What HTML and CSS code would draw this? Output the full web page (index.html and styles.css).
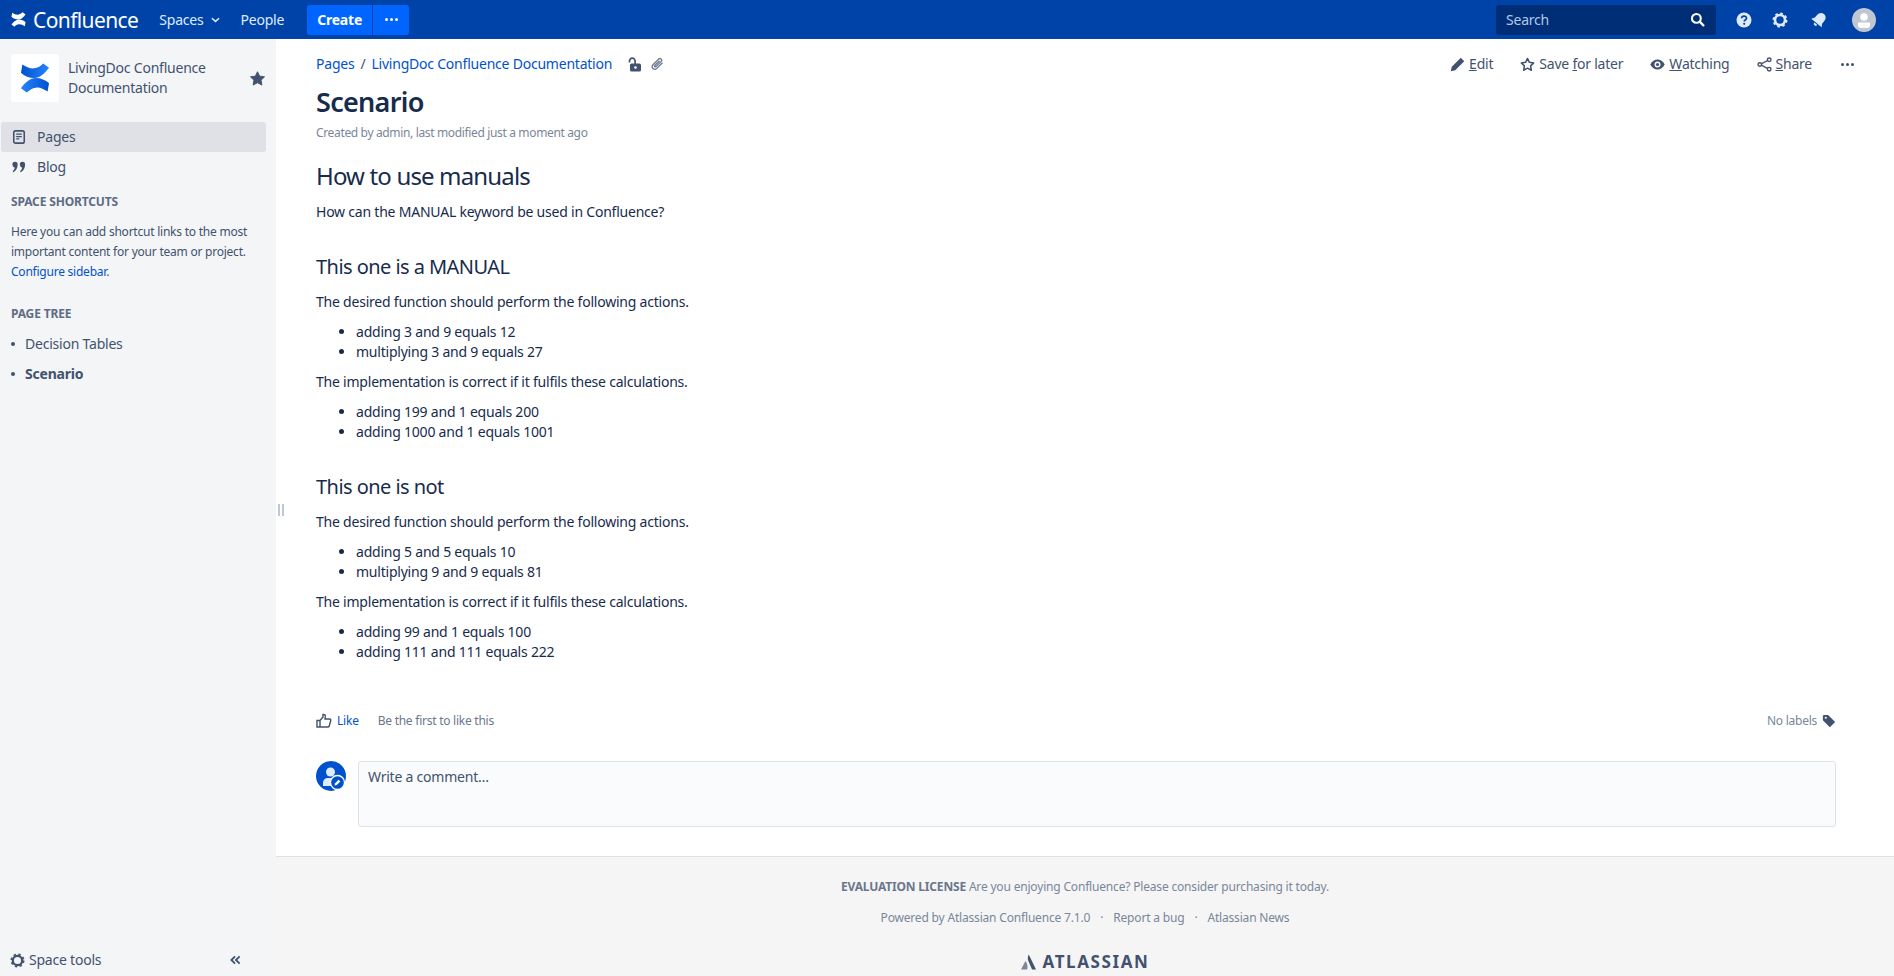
FILE: index.html
```html
<!DOCTYPE html>
<html>
	<head>
		<meta charset="utf-8">
		<title>Scenario</title>
		<link rel="stylesheet" href="styles.css">
	</head>
	<body>
		<header class="topbar">
			<a class="logo" href="#">
				<svg class="logo-mark" viewBox="0 0 30 31"><path d="M2 1.500C6 4 10 6 14 5.500 18 5 21 3 23.500.5L29.500 5C25 11 20 15.500 14.500 15.500 9 15.500 4 13.500.5 10z" fill="#fff"/><path d="M2 1.500C6 4 10 6 14 5.500 18 5 21 3 23.500.5L29.500 5C25 11 20 15.500 14.500 15.500 9 15.500 4 13.500.5 10z" fill="#fff" transform="rotate(180 15 15.500)"/></svg>
				<span class="logo-text">Confluence</span>
			</a>
			<nav class="topnav">
				<a href="#">Spaces <svg class="caret" viewBox="0 0 10 6"><path d="M1 1l4 3.600L9 1" fill="none" stroke="#deebff" stroke-width="1.700"/></svg></a>
				<a href="#">People</a>
			</nav>
			<div class="create-group">
				<a class="create" href="#">Create</a>
				<a class="create-more" href="#"><i></i><i></i><i></i></a>
			</div>
			<div class="topbar-right">
				<div class="search">
					<span>Search</span>
					<svg viewBox="0 0 16 16"><circle cx="6.800" cy="6.800" r="4.700" fill="none" stroke="#fff" stroke-width="2.200"/><path d="M10.300 10.300l4 4" stroke="#fff" stroke-width="2.400" stroke-linecap="round"/></svg>
				</div>
				<svg class="top-icon" viewBox="0 0 16 16"><circle cx="8" cy="8" r="7.500" fill="#deebff"/><path d="M5.700 6.300c0-3 4.800-3 4.800-.1 0 1.800-2.300 1.700-2.300 3.300" fill="none" stroke="#0043a8" stroke-width="1.700"/><circle cx="8.200" cy="11.800" r="1.100" fill="#0043a8"/></svg>
				<svg class="top-icon" viewBox="0 0 16 16"><circle cx="8" cy="8" r="5" fill="none" stroke="#deebff" stroke-width="2.600"/><circle cx="8" cy="8" r="6.600" fill="none" stroke="#deebff" stroke-width="1.800" stroke-dasharray="2.600 2.600"/></svg>
				<svg class="top-icon bell" viewBox="0 0 16 16"><g transform="rotate(40 8 8)"><path d="M8 .3C5 .3 3.300 2.500 3.300 5.400v3.400L1.300 12h13.400l-2-3.200V5.400C12.700 2.500 11 .3 8 .3z" fill="#deebff"/><path d="M6 13a2 2 0 0 0 4 0z" fill="#deebff"/></g></svg>
				<svg class="avatar" viewBox="0 0 24 24"><circle cx="12" cy="12" r="12" fill="#c1c7d0"/><circle cx="12" cy="9" r="3.800" fill="#fff"/><path d="M6 14.500h12v2.500a3 3 0 0 1-3 3H9a3 3 0 0 1-3-3z" fill="#fff"/></svg>
			</div>
		</header>

		<div class="layout">
			<aside class="sidebar">
				<div class="space-head">
					<div class="space-logo">
						<svg viewBox="0 0 30 31"><defs><linearGradient id="band" x1="0" y1="0" x2="1" y2="0"><stop offset="0" stop-color="#0052cc"/><stop offset="1" stop-color="#2684ff"/></linearGradient></defs><path d="M2 1.500C6 4 10 6 14 5.500 18 5 21 3 23.500.5L29.500 5C25 11 20 15.500 14.500 15.500 9 15.500 4 13.500.5 10z" fill="url(#band)"/><path d="M2 1.500C6 4 10 6 14 5.500 18 5 21 3 23.500.5L29.500 5C25 11 20 15.500 14.500 15.500 9 15.500 4 13.500.5 10z" fill="url(#band)" transform="rotate(180 15 15.500)"/></svg>
					</div>
					<div class="space-name">LivingDoc Confluence Documentation</div>
					<svg class="space-star" viewBox="0 0 16 16"><path d="M8 .8l2.300 4.700 5.200.7-3.700 3.600.9 5.200L8 12.500l-4.700 2.500.9-5.200L.5 6.200l5.200-.7z" fill="#42526e" stroke="#42526e" stroke-linejoin="round"/></svg>
				</div>
				<ul class="side-nav">
					<li class="active">
						<svg viewBox="0 0 14 16"><rect x="1" y="1" width="12" height="14" rx="2" fill="none" stroke="#42526e" stroke-width="1.800"/><path d="M3.800 4.800h6.400M3.800 7.500h6.400M3.800 10.200h3.500" stroke="#42526e" stroke-width="1.500"/></svg>
						Pages
					</li>
					<li>
						<svg viewBox="0 0 16 14"><path d="M3.500 1a3 3 0 0 1 3 3c0 4-2 7.500-5 9l-.8-1.200C2.400 10.500 3 9 3.100 7.600 1.500 7.500.5 6 .5 4.200A3 3 0 0 1 3.500 1zM12 1a3 3 0 0 1 3 3c0 4-2 7.500-5 9l-.8-1.200c1.700-1.300 2.300-2.800 2.400-4.200C10 7.500 9 6 9 4.200A3 3 0 0 1 12 1z" fill="#42526e"/></svg>
						Blog
					</li>
				</ul>
				<h5 class="side-title">SPACE SHORTCUTS</h5>
				<p class="side-text">Here you can add shortcut links to the most important content for your team or project. <a href="#">Configure sidebar</a>.</p>
				<h5 class="side-title tree-title">PAGE TREE</h5>
				<ul class="page-tree">
					<li>Decision Tables</li>
					<li class="current">Scenario</li>
				</ul>
				<div class="side-foot">
					<span class="space-tools">
						<svg viewBox="0 0 16 16"><circle cx="8" cy="8" r="5" fill="none" stroke="#42526e" stroke-width="2.400"/><circle cx="8" cy="8" r="6.600" fill="none" stroke="#42526e" stroke-width="1.800" stroke-dasharray="2.600 2.600"/></svg>
						Space tools
					</span>
					<svg class="collapse" viewBox="0 0 12 10"><path d="M5.500 1L1.500 5l4 4M10.500 1l-4 4 4 4" fill="none" stroke="#42526e" stroke-width="2"/></svg>
				</div>
			</aside>
			<span class="splitter"></span>

			<div class="main">
				<main class="content">
					<div class="page-top">
						<div class="crumbs">
							<a href="#">Pages</a><span class="sep">/</span><a href="#">LivingDoc Confluence Documentation</a>
							<svg class="crumb-lock" viewBox="0 0 14 15"><path d="M1.500 5.500V4a2.800 2.800 0 0 1 5.600 0v4" fill="none" stroke="#42526e" stroke-width="1.700"/><rect x="2" y="6.500" width="11" height="8" rx="1.500" fill="#42526e"/><circle cx="7.500" cy="10.500" r="1.300" fill="#fff"/></svg>
							<svg class="crumb-clip" viewBox="0 0 16 16"><path d="M14.300 6.500L7.800 13c-3 2.900-7.200-1.100-4.400-4.200l6.400-6.400c2-1.900 4.800.9 2.800 2.900L6.900 11c-1 .9-2.300-.3-1.400-1.300l5.400-5.400" fill="none" stroke="#6b778c" stroke-width="1.500"/></svg>
						</div>
						<div class="actions">
							<a href="#"><svg viewBox="0 0 16 16"><path d="M11.500.8l3.700 3.700-9.600 9.600-4.800 1.100 1.100-4.800z" fill="#42526e"/></svg><span><u>E</u>dit</span></a>
							<a href="#"><svg viewBox="0 0 16 16"><path d="M8 1.500l2 4.200 4.600.6-3.300 3.200.8 4.600L8 11.900l-4.100 2.200.8-4.600-3.300-3.200L6 5.700z" fill="none" stroke="#42526e" stroke-width="1.600" stroke-linejoin="round"/></svg><span>Save <u>f</u>or later</span></a>
							<a href="#"><svg viewBox="0 0 16 16"><path d="M.3 8C2.300 4.400 4.900 2.600 8 2.600s5.700 1.800 7.700 5.400c-2 3.600-4.600 5.400-7.700 5.400S2.300 11.600.3 8z" fill="#42526e"/><circle cx="8" cy="8" r="3.200" fill="#fff"/><circle cx="8" cy="8" r="1.700" fill="#42526e"/></svg><span><u>W</u>atching</span></a>
							<a href="#"><svg viewBox="0 0 16 16"><path d="M12.500 3L3.500 8l9 5" fill="none" stroke="#42526e" stroke-width="1.500"/><circle cx="13" cy="3" r="1.900" fill="#fff" stroke="#42526e" stroke-width="1.500"/><circle cx="3" cy="8" r="1.900" fill="#fff" stroke="#42526e" stroke-width="1.500"/><circle cx="13" cy="13" r="1.900" fill="#fff" stroke="#42526e" stroke-width="1.500"/></svg><span><u>S</u>hare</span></a>
							<a class="more" href="#"><i></i><i></i><i></i></a>
						</div>
					</div>

					<h1 class="page-title">Scenario</h1>
					<p class="page-meta">Created by admin, last modified just a moment ago</p>

					<div class="wiki">
						<h1>How to use manuals</h1>
						<p>How can the MANUAL keyword be used in Confluence?</p>
						<h2>This one is a MANUAL</h2>
						<p>The desired function should perform the following actions.</p>
						<ul>
							<li>adding 3 and 9 equals 12</li>
							<li>multiplying 3 and 9 equals 27</li>
						</ul>
						<p>The implementation is correct if it fulfils these calculations.</p>
						<ul>
							<li>adding 199 and 1 equals 200</li>
							<li>adding 1000 and 1 equals 1001</li>
						</ul>
						<h2>This one is not</h2>
						<p>The desired function should perform the following actions.</p>
						<ul>
							<li>adding 5 and 5 equals 10</li>
							<li>multiplying 9 and 9 equals 81</li>
						</ul>
						<p>The implementation is correct if it fulfils these calculations.</p>
						<ul>
							<li>adding 99 and 1 equals 100</li>
							<li>adding 111 and 111 equals 222</li>
						</ul>
					</div>

					<div class="like-row">
						<svg class="like-icon" viewBox="0 0 16 16"><path d="M1 7.500h3V14H1zM4 7.500L7 4V1.500c1.500-.5 2.500.8 2.300 2L9 6h4.500c1 0 1.500.8 1.200 1.700l-1.500 5.300c-.2.700-.7 1-1.300 1H4" fill="none" stroke="#42526e" stroke-width="1.400"/></svg>
						<a class="like" href="#">Like</a>
						<span class="like-note">Be the first to like this</span>
						<span class="labels">No labels
							<svg viewBox="0 0 16 16"><path d="M1 2.500A1.500 1.500 0 0 1 2.500 1H7l8 8-6 6-8-8z" fill="#42526e"/><circle cx="4.300" cy="4.300" r="1.200" fill="#fff"/></svg>
						</span>
					</div>

					<div class="comment">
						<svg class="comment-avatar" viewBox="0 0 30 30"><circle cx="15" cy="15" r="15" fill="#0052cc"/><circle cx="14.500" cy="11" r="4.500" fill="#deebff"/><path d="M7 25v-3c0-3 2-5 5-5h5c3 0 5 2 5 5v3z" fill="#deebff"/><circle cx="21.500" cy="21.500" r="7" fill="#0052cc" stroke="#fff" stroke-width="1.300"/><path d="M18.500 24.500l.6-2.300 3.500-3.500 1.700 1.700-3.500 3.500z" fill="#fff"/></svg>
						<div class="comment-box">Write a comment…</div>
					</div>
				</main>

				<footer class="footer">
					<p><b>EVALUATION LICENSE</b> Are you enjoying Confluence? Please consider purchasing it today.</p>
					<p class="foot-links"><span>Powered by Atlassian Confluence 7.1.0</span><span class="dot">·</span><span>Report a bug</span><span class="dot">·</span><span>Atlassian News</span></p>
					<div class="atlassian">
						<svg viewBox="0 0 16 16"><path d="M8.300 0c-1.300 2.400-1.400 5-.2 7.500l3.700 8.500h4.200z" fill="#42526e"/><path d="M5.200 7.500c-.2-.3-.5-.3-.7 0L0 16h6.500c.9-2.500.4-6-1.300-8.500z" fill="#7a869a"/></svg>
						<span>ATLASSIAN</span>
					</div>
				</footer>
			</div>
		</div>
	</body>
</html>
```

FILE: styles.css
```css
* {margin: 0; padding: 0; box-sizing: border-box;}
html, body {height: 100%; overflow: hidden;}
body {font-family: "Noto Sans", "Open Sans", sans-serif; font-size: 14px; line-height: 20px; letter-spacing: -.22px; color: #172b4d; background: #fff;}
a {color: inherit; text-decoration: none;}
ul {list-style: none;}
svg {display: block; flex: none;}

/* top bar */
.topbar {height: 39px; background: #0043a8; color: #deebff; display: flex; align-items: center; padding-left: 11px;}
.logo {display: flex; align-items: center; color: #fff;}
.logo-mark {width: 15px; height: 15px;}
.logo-text {font-size: 21px; margin-left: 7px; letter-spacing: -.6px;}
.topnav {display: flex; margin-left: 21px; gap: 20px;}
.topnav a {display: flex; align-items: center; gap: 8px;}
.caret {width: 9px; height: 6px;}
.create-group {display: flex; margin-left: 23px; height: 30px; gap: 1px;}
.create {width: 65px; background: #0065ff; color: #fff; font-weight: 700; text-align: center; line-height: 30px; border-radius: 3px 0 0 3px;}
.create-more {width: 36px; background: #0065ff; border-radius: 0 3px 3px 0; display: flex; align-items: center; justify-content: center; gap: 2px;}
.create-more i {width: 3px; height: 3px; background: #fff; border-radius: 50%;}
.topbar-right {margin-left: auto; display: flex; align-items: center; padding-right: 18px;}
.search {width: 220px; height: 30px; background: #002e76; border-radius: 3px; display: flex; align-items: center; justify-content: space-between; padding: 0 11px 0 10px; color: #b3c7e6;}
.search svg {width: 15px; height: 15px;}
.top-icon {width: 16px; height: 16px; margin-left: 20px;}
.top-icon.bell {margin-left: 23px;}
.avatar {width: 24px; height: 24px; margin-left: 25px;}

/* columns */
.layout {display: flex; height: 937px; position: relative;}
.sidebar {width: 276px; flex: none; background: #f4f5f7; color: #42526e; padding: 15px 0 0; display: flex; flex-direction: column;}
.splitter {position: absolute; left: 278px; top: 465px; width: 6px; height: 12px; border-left: 2px solid #c1c7d0; border-right: 2px solid #c1c7d0;}
.main {flex: 1; min-width: 0; display: flex; flex-direction: column;}

/* sidebar */
.space-head {display: flex; align-items: center; padding-left: 11px; height: 48px;}
.space-logo {width: 48px; height: 48px; background: #fff; border-radius: 3px; padding: 9px;}
.space-logo svg {width: 30px; height: 30px;}
.space-name {width: 172px; margin-left: 9px; line-height: 20px;}
.space-star {width: 15px; height: 15px; margin-left: 10px;}
.side-nav {margin: 20px 0 0 1px;}
.side-nav li {width: 265px; height: 30px; display: flex; align-items: center; gap: 11px; padding-left: 11px; border-radius: 3px;}
.side-nav li.active {background: #dfe1e6;}
.side-nav svg {width: 14px; height: 14px;}
.side-title {font-size: 12px; font-weight: 700; line-height: 16px; letter-spacing: -.15px; color: #5e6c84; padding-left: 11px; margin-top: 12px;}
.side-text {font-size: 12px; line-height: 20px; letter-spacing: -.23px; padding-left: 11px; width: 260px; margin-top: 12px;}
.side-text a {color: #0052cc;}
.tree-title {margin-top: 24px;}
.page-tree {margin-top: 7px; padding-left: 11px;}
.page-tree li {height: 30px; line-height: 30px; padding-left: 14px; position: relative;}
.page-tree li::before {content: ""; position: absolute; left: 0; top: 13px; width: 4px; height: 4px; border-radius: 50%; background: #42526e;}
.page-tree .current {font-weight: 700;}
.side-foot {margin-top: auto; height: 32px; display: flex; align-items: center; justify-content: space-between; padding: 0 35px 0 10px;}
.space-tools {display: flex; align-items: center; gap: 4px;}
.space-tools svg {width: 15px; height: 15px;}
.collapse {width: 11px; height: 10px;}

/* page header */
.content {flex: 1; padding: 0 40px;}
.page-top {display: flex; justify-content: space-between; align-items: center; height: 28px; margin-top: 11px;}
.crumbs {display: flex; align-items: center; color: #0052cc;}
.crumbs .sep {color: #42526e; margin: 0 6px;}
.crumb-lock {width: 14px; height: 15px; margin-left: 16px;}
.crumb-clip {width: 14px; height: 14px; margin-left: 8px;}
.actions {display: flex; align-items: center; color: #42526e;}
.actions a {display: flex; align-items: center; gap: 4px; margin-left: 27px;}
.actions svg {width: 15px; height: 15px;}
.actions .more {gap: 2px; margin-right: 0; margin-left: 29px;}
.more i {width: 3px; height: 3px; background: #42526e; border-radius: 50%;}
.page-title {font-size: 27px; line-height: 36px; font-weight: 600; letter-spacing: -.7px; margin-top: 6px;}
.page-meta {font-size: 12px; line-height: 16px; letter-spacing: -.35px; color: #7a869a; margin-top: 5px;}

/* page body */
.wiki {margin-top: 19px;}
.wiki h1 {font-size: 24px; line-height: 32px; font-weight: 400; letter-spacing: -.85px;}
.wiki h2 {font-size: 20px; line-height: 30px; font-weight: 400; letter-spacing: -.55px; margin-top: 30px;}
.wiki p {margin-top: 10px;}
.wiki ul {list-style: disc; padding-left: 40px; margin-top: 10px;}

.like-row {display: flex; align-items: center; margin-top: 49px; margin-right: 18px; height: 20px; color: #6b778c;}
.like-icon {width: 16px; height: 16px;}
.like {color: #0052cc; font-size: 12px; margin-left: 5px;}
.like-note {font-size: 12px; letter-spacing: -.25px; margin-left: 19px;}
.labels {margin-left: auto; display: flex; align-items: center; gap: 5px; font-size: 12px; letter-spacing: -.25px; color: #7a869a;}
.labels svg {width: 14px; height: 14px;}
.comment {display: flex; margin-top: 30px; margin-right: 18px; gap: 12px;}
.comment-avatar {width: 30px; height: 30px;}
.comment-box {flex: 1; height: 66px; background: #fafbfc; border: 1px solid #dfe1e6; border-radius: 3px; padding: 5px 9px; color: #42526e;}

/* footer */
.footer {height: 120px; background: #f5f5f5; border-top: 1px solid #dfe1e6; text-align: center; font-size: 12px; letter-spacing: -.18px; color: #7a869a; padding-top: 20px;}
.footer b {color: #6b778c;}
.foot-links {margin-top: 11px;}
.foot-links .dot {margin: 0 10px;}
.atlassian {display: flex; justify-content: center; align-items: center; gap: 7px; margin-top: 24px; color: #42526e; font-size: 17px; font-weight: 700; letter-spacing: 1.6px;}
.atlassian svg {width: 15px; height: 16px;}
```
